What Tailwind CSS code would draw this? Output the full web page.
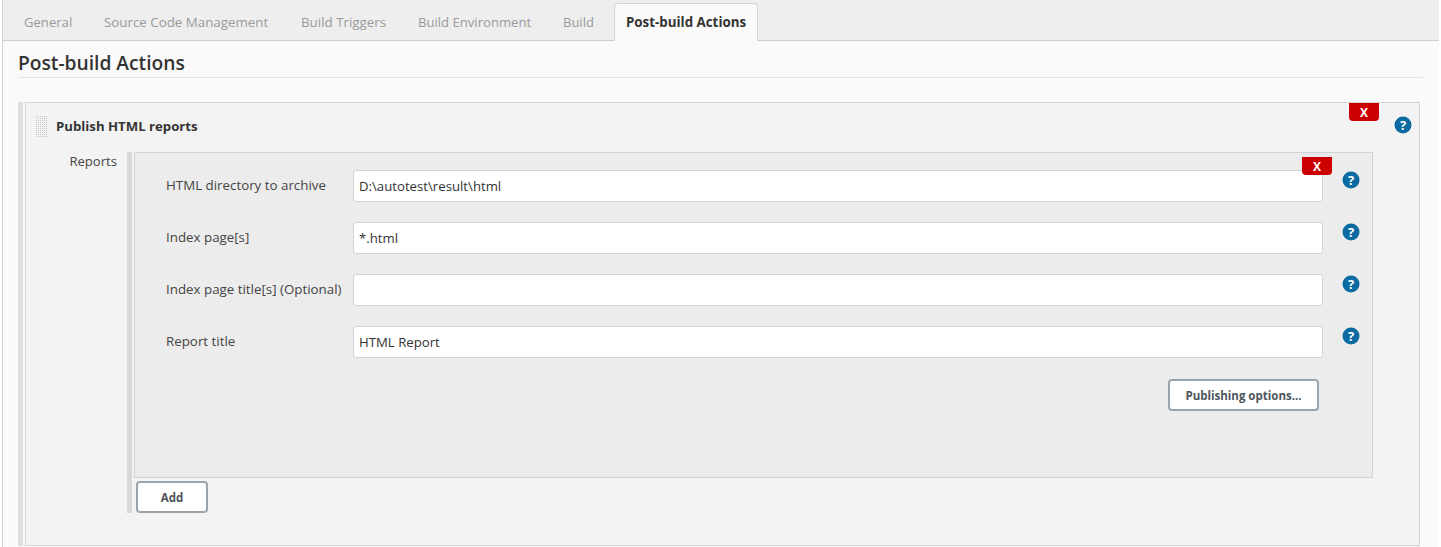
<!DOCTYPE html>
<html lang="en">
<head>
  <meta charset="UTF-8">
  <title>Post-build Actions</title>
  <script src="https://cdn.jsdelivr.net/npm/@tailwindcss/browser@4"></script>
</head>
<body class="bg-white h-[547px] overflow-hidden font-['Open_Sans',sans-serif] text-[13.33px] text-[#333]">
  <div class="ml-[2px] mr-[2px] h-[547px] border-l border-[#d0d0d0] bg-[#fafafa] overflow-hidden">

    <!-- Tabs -->
    <div class="h-[41px] pt-[3px] pl-[5px] flex items-stretch bg-[#eeeeee] border-b border-[#cfcfcf] text-[#9a9a9a]">
      <div class="w-[80px] pl-[16px] pt-[10px] text-[13.1px]">General</div>
      <div class="w-[197px] pl-[16px] pt-[10px]">Source Code Management</div>
      <div class="w-[117px] pl-[16px] pt-[10px]">Build Triggers</div>
      <div class="w-[145px] pl-[16px] pt-[10px] text-[13.1px]">Build Environment</div>
      <div class="w-[67px] pl-[16px] pt-[10px] text-[13px]">Build</div>
      <div class="px-[11px] pt-[9px] h-[38px] bg-[#fafafa] border border-b-0 border-[#d3d3d3] rounded-t-[4px] font-bold text-[13.33px] text-[#333]">Post-build Actions</div>
    </div>

    <div class="pl-[15px] pr-[16px]">
      <h2 class="h-[37px] pt-[8px] border-b border-[#e4e4e4] text-[19.2px] leading-[28px] font-semibold text-[#333]">Post-build Actions</h2>

      <!-- Publish HTML reports -->
      <div class="mt-[24px] flex">
        <div class="w-[5px] mr-[2px] bg-[#dfdfdf] shrink-0"></div>
        <div class="relative w-[1395px] h-[444px] bg-[#f3f3f3] border border-[#d3d3d3]">
          <div class="absolute top-0 right-[40px] w-[30px] h-[18px] bg-[#cc0000] rounded-b-[4px] text-white text-[12px] leading-[19px] font-bold text-center">X</div>
          <svg class="absolute top-[13px] left-[10px]" width="12" height="21"><defs><pattern id="grip" width="2" height="2" patternUnits="userSpaceOnUse"><rect width="1" height="1" fill="#c4c4c4"/></pattern></defs><rect width="12" height="21" fill="url(#grip)"/></svg>
          <svg class="absolute top-[13px] right-[7px]" width="18" height="18" viewBox="0 0 18 18"><circle cx="9" cy="9" r="8.5" fill="#0b6aa2"/><text x="9" y="13.5" text-anchor="middle" fill="#fff" font-family="Open Sans" font-size="13" font-weight="700">?</text></svg>

          <div class="pl-[30px] h-[49px] pt-[13px] font-bold text-[13.2px] leading-[20px] text-[#333]">Publish HTML reports</div>

          <div class="flex">
            <div class="w-[91px] text-right text-[13.1px] text-[#444] leading-[18px]">Reports</div>
            <div class="ml-[10px]">
              <div class="flex h-[361px]">
                <div class="w-[5px] mr-[2px] bg-[#d8d8d8]"></div>
                <div>
                  <!-- Repeatable block -->
                  <div class="relative w-[1239px] h-[326px] bg-[#ececec] border border-[#d3d3d3] pt-[17px]">
                    <div class="absolute top-[4px] right-[40px] w-[30px] h-[18px] bg-[#cc0000] rounded-b-[4px] text-white text-[12px] leading-[19px] font-bold text-center">X</div>

                    <div class="flex h-[52px] items-start">
                      <label class="w-[218px] pl-[31px] pt-[6px] text-[#444]">HTML directory to archive</label>
                      <input class="w-[970px] h-[32px] pl-[5px] pr-[6px] bg-white border border-[#d3d3d3] rounded-[3px] text-[13.2px] text-[#333] outline-none" value="D:\autotest\result\html">
                      <svg class="ml-[19px] mt-[1px]" width="18" height="18" viewBox="0 0 18 18"><circle cx="9" cy="9" r="8.5" fill="#0b6aa2"/><text x="9" y="13.5" text-anchor="middle" fill="#fff" font-family="Open Sans" font-size="13" font-weight="700">?</text></svg>
                    </div>
                    <div class="flex h-[52px] items-start">
                      <label class="w-[218px] pl-[31px] pt-[6px] text-[#444]">Index page[s]</label>
                      <input class="w-[970px] h-[32px] pl-[5px] pr-[6px] bg-white border border-[#d3d3d3] rounded-[3px] text-[13.2px] text-[#333] outline-none" value="*.html">
                      <svg class="ml-[19px] mt-[1px]" width="18" height="18" viewBox="0 0 18 18"><circle cx="9" cy="9" r="8.5" fill="#0b6aa2"/><text x="9" y="13.5" text-anchor="middle" fill="#fff" font-family="Open Sans" font-size="13" font-weight="700">?</text></svg>
                    </div>
                    <div class="flex h-[52px] items-start">
                      <label class="w-[218px] pl-[31px] pt-[6px] text-[#444] whitespace-nowrap">Index page title[s] (Optional)</label>
                      <input class="w-[970px] h-[32px] pl-[5px] pr-[6px] bg-white border border-[#d3d3d3] rounded-[3px] text-[13.2px] text-[#333] outline-none" value="">
                      <svg class="ml-[19px] mt-[1px]" width="18" height="18" viewBox="0 0 18 18"><circle cx="9" cy="9" r="8.5" fill="#0b6aa2"/><text x="9" y="13.5" text-anchor="middle" fill="#fff" font-family="Open Sans" font-size="13" font-weight="700">?</text></svg>
                    </div>
                    <div class="flex h-[52px] items-start">
                      <label class="w-[218px] pl-[31px] pt-[6px] text-[#444]">Report title</label>
                      <input class="w-[970px] h-[32px] pl-[5px] pr-[6px] bg-white border border-[#d3d3d3] rounded-[3px] text-[13.2px] text-[#333] outline-none" value="HTML Report">
                      <svg class="ml-[19px] mt-[1px]" width="18" height="18" viewBox="0 0 18 18"><circle cx="9" cy="9" r="8.5" fill="#0b6aa2"/><text x="9" y="13.5" text-anchor="middle" fill="#fff" font-family="Open Sans" font-size="13" font-weight="700">?</text></svg>
                    </div>

                    <div class="flex justify-end pr-[53px] pt-[1px]">
                      <button class="w-[151px] h-[32px] pt-[1px] bg-white border-2 border-[#9aa4ac] rounded-[4px] text-[11.5px] font-bold text-[#4d545d]">Publishing options...</button>
                    </div>
                  </div>
                  <button class="mt-[3px] ml-[2px] w-[72px] h-[32px] pt-[1px] bg-white border-2 border-[#9aa4ac] rounded-[4px] text-[11.5px] font-bold text-[#4d545d]">Add</button>
                </div>
              </div>
            </div>
          </div>
        </div>
      </div>
    </div>
  </div>
</body>
</html>
